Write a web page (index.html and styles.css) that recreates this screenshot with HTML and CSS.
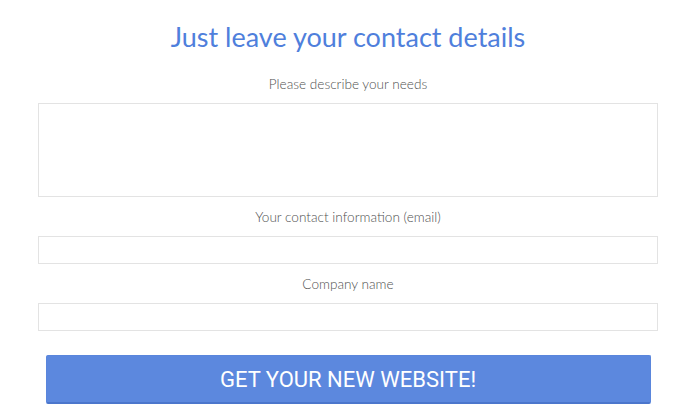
FILE: index.html
```html
<!DOCTYPE html>
<html>
<head>
<meta charset="utf-8">
<link rel="stylesheet" href="styles.css">
</head>
<body>
<form class="contact">
  <h1 class="title">Just leave your contact details</h1>
  <label class="label" for="needs">Please describe your needs</label>
  <textarea class="field area" id="needs"></textarea>
  <label class="label" for="email">Your contact information (email)</label>
  <input class="field line" id="email" type="text">
  <label class="label" for="company">Company name</label>
  <input class="field line" id="company" type="text">
  <button class="submit" type="button">GET YOUR NEW WEBSITE!</button>
</form>
</body>
</html>
```
FILE: styles.css
```css
html, body {
  margin: 0;
  padding: 0;
  background: #ffffff;
}
.contact {
  width: 620px;
  margin: 0 0 0 38px;
  padding-top: 20px;
  display: flex;
  flex-direction: column;
  font-family: Lato, "Open Sans", sans-serif;
}
.title {
  margin: 0;
  font-size: 27px;
  font-weight: 400;
  line-height: 34px;
  color: #4f7fdc;
  text-align: center;
}
.label {
  display: block;
  margin: 10px 0 9px;
  font-size: 13.6px;
  font-weight: 300;
  line-height: 20px;
  color: #505050;
  text-align: center;
}
.title + .label {
  margin-top: 20px;
}
.field {
  box-sizing: border-box;
  display: block;
  width: 620px;
  margin: 0;
  border: 1px solid #e3e3e3;
  background: #ffffff;
  outline: none;
  padding: 4px 8px;
  font-family: Lato, sans-serif;
  resize: none;
}
.area {
  height: 94px;
}
.line {
  height: 28px;
}
.submit {
  box-sizing: border-box;
  align-self: center;
  width: 605px;
  height: 49px;
  margin: 24px 0 0 0;
  border: 1px solid #5a86dc;
  border-bottom: 2px solid #4b76cc;
  border-radius: 2px;
  background: #5c88de;
  color: #ffffff;
  font-family: Roboto, "Liberation Sans", Arial, sans-serif;
  font-size: 22px;
  font-weight: 400;
  cursor: pointer;
  padding: 0;
}
```
